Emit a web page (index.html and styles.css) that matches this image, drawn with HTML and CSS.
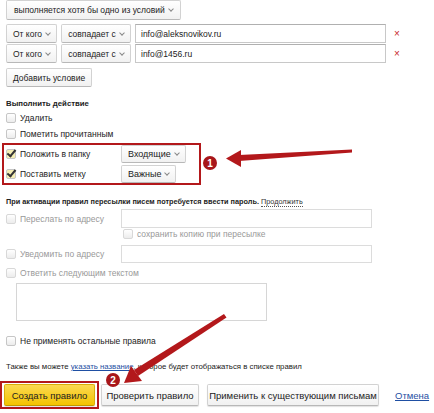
FILE: index.html
```html
<!DOCTYPE html>
<html lang="ru">
<head>
  <meta charset="UTF-8" />
  <title>Создание правила</title>
  <link rel="stylesheet" href="styles.css">
</head>
<body>
  <div class="page">

    <div class="row">
      <button class="btn">выполняется хотя бы одно из условий <span class="chev"></span></button>
    </div>

    <div class="row cond">
      <button class="btn sel-from">От кого <span class="chev"></span></button>
      <button class="btn sel-match">совпадает с <span class="chev"></span></button>
      <input class="field" type="text" value="info@aleksnovikov.ru">
      <span class="remove">×</span>
    </div>
    <div class="row cond second">
      <button class="btn sel-from">От кого <span class="chev"></span></button>
      <button class="btn sel-match">совпадает с <span class="chev"></span></button>
      <input class="field" type="text" value="info@1456.ru">
      <span class="remove">×</span>
    </div>

    <div class="row add">
      <button class="btn">Добавить условие</button>
    </div>

    <div class="heading">Выполнить действие</div>

    <label class="check-row"><span class="box"></span>Удалить</label>
    <label class="check-row"><span class="box"></span>Пометить прочитанным</label>

    <div class="highlight">
      <div class="action-row">
        <label class="action-label"><span class="box checked"></span>Положить в папку</label>
        <button class="btn">Входящие <span class="chev"></span></button>
      </div>
      <div class="action-row">
        <label class="action-label"><span class="box checked"></span>Поставить метку</label>
        <button class="btn">Важные <span class="chev"></span></button>
      </div>
    </div>

    <div class="notice">При активации правил пересылки писем потребуется ввести пароль. <span class="dotted">Продолжить</span></div>

    <div class="action-row disabled forward">
      <label class="action-label"><span class="box"></span>Переслать по адресу</label>
      <input class="field wide" type="text">
    </div>
    <label class="check-row disabled copy"><span class="box"></span>сохранить копию при пересылке</label>
    <div class="action-row disabled notify">
      <label class="action-label"><span class="box"></span>Уведомить по адресу</label>
      <input class="field wide" type="text">
    </div>
    <label class="check-row disabled reply"><span class="box"></span>Ответить следующим текстом</label>
    <textarea class="reply-text"></textarea>

    <label class="check-row stop"><span class="box"></span>Не применять остальные правила</label>

    <div class="hint">Также вы можете <a href="#" class="link">указать название</a>, которое будет отображаться в списке правил</div>

    <div class="buttons">
      <div class="highlight-btn">
        <button class="btn big primary">Создать правило</button>
      </div>
      <button class="btn big check">Проверить правило</button>
      <button class="btn big apply">Применить к существующим письмам</button>
      <a href="#" class="link cancel">Отмена</a>
    </div>

  </div>

  <svg class="marks" viewBox="0 0 434 413" width="434" height="413">
    <polygon points="352,149.5 352,152.5 239,161 239,155" fill="#b3181b"/>
    <polygon points="226,158.5 241,150 241,167" fill="#b3181b"/>
    <polygon points="224,314 226.5,317.5 138,376 134,370" fill="#b3181b"/>
    <polygon points="124,383 131,366 142,381" fill="#b3181b"/>
    <circle cx="210" cy="163" r="7" fill="#a8161a"/>
    <text x="210" y="166.5" text-anchor="middle" class="badge-num">1</text>
    <circle cx="113" cy="380" r="7" fill="#a8161a"/>
    <text x="113" y="383.5" text-anchor="middle" class="badge-num">2</text>
  </svg>
</body>
</html>
```

FILE: styles.css
```css
body {
  margin: 0;
  font-family: Arial, "Liberation Sans", sans-serif;
  font-size: 8.5px;
  color: #222;
  background: #fff;
}

.page {
  padding: 0 6px;
}

.row {
  display: flex;
  align-items: center;
}

.btn {
  display: inline-flex;
  align-items: center;
  justify-content: center;
  flex: none;
  height: 20px;
  padding: 0 7px;
  font-family: Arial, "Liberation Sans", sans-serif;
  font-size: 8.5px;
  color: #222;
  white-space: nowrap;
  background: linear-gradient(#fff, #f1f1f1);
  border: 1px solid #d2d2d2;
  border-bottom-color: #b8b8b8;
  border-radius: 2px;
  box-sizing: border-box;
  cursor: pointer;
}

.chev {
  display: inline-block;
  width: 3px;
  height: 3px;
  margin: -2px 0 0 4px;
  border-right: 1px solid #888;
  border-bottom: 1px solid #888;
  transform: rotate(45deg);
}

.cond {
  margin-top: 4px;
  height: 19px;
}

.cond.second {
  margin-top: 1px;
}

.cond .btn {
  height: 19px;
  padding: 0;
}

.sel-from {
  width: 51px;
}

.sel-match {
  width: 70px;
  margin-left: 4px;
}

.field {
  height: 19px;
  box-sizing: border-box;
  border: 1px solid #c8c8c8;
  border-top-color: #b0b0b0;
  padding: 0 5px;
  font-family: Arial, "Liberation Sans", sans-serif;
  font-size: 8.5px;
  color: #222;
}

.cond .field {
  width: 251px;
  margin-left: 4px;
}

.remove {
  margin-left: 8px;
  color: #c8282c;
  font-size: 10px;
}

.add {
  margin-top: 5px;
}

.add .btn {
  height: 19px;
  padding: 0 6px;
}

.heading {
  margin-top: 11px;
  line-height: 12px;
  font-size: 7.8px;
  font-weight: bold;
}

.check-row {
  display: flex;
  align-items: center;
  height: 16px;
}

.box {
  display: inline-block;
  flex: none;
  width: 8px;
  height: 8px;
  margin-right: 4px;
  border: 1px solid #c6c6c6;
  border-radius: 2px;
  background: linear-gradient(#fff, #ececec);
  position: relative;
}

.box.checked {
  background: #f4eeb4;
}

.box.checked::after {
  content: "";
  position: absolute;
  left: 2px;
  top: -2px;
  width: 3px;
  height: 7px;
  border-right: 2px solid #333;
  border-bottom: 2px solid #333;
  transform: rotate(40deg);
}

.highlight {
  margin: 1px 0 0 -4px;
  width: 193px;
  padding: 0 0 0 2px;
  border: 2px solid #b3181b;
}

.action-row {
  display: flex;
  align-items: center;
}

.highlight .action-row {
  height: 18px;
}

.highlight .action-row + .action-row {
  margin-top: 2px;
}

.highlight .btn {
  height: 18px;
  font-size: 9px;
  padding: 0 6px;
}

.action-label {
  display: flex;
  align-items: center;
  width: 115px;
  flex: none;
  font-size: 8.5px;
}

.notice {
  margin-top: 11px;
  line-height: 12px;
  font-size: 7.3px;
  font-weight: bold;
  color: #222;
}

.dotted {
  font-weight: normal;
  color: #333;
  border-bottom: 1px dotted #555;
}

.disabled {
  color: #999;
}

.disabled .box {
  border-color: #d8d8d8;
}

.forward {
  margin-top: 1px;
}

.field.wide {
  width: 251px;
  height: 19px;
  border-color: #dcdcdc;
}

.copy {
  height: 12px;
  padding-left: 117px;
}

.notify {
  margin-top: 5px;
}

.notify .field.wide {
  height: 18px;
}

.reply {
  margin-top: 3px;
  height: 14px;
}

.reply-text {
  display: block;
  margin: 3px 0 0 10px;
  width: 251px;
  height: 38px;
  box-sizing: border-box;
  border: 1px solid #d6d6d6;
  resize: none;
}

.stop {
  margin-top: 13px;
  height: 14px;
  font-size: 8.5px;
}

.hint {
  margin-top: 13px;
  line-height: 12px;
  font-size: 7.8px;
  color: #222;
}

.link {
  color: #1f4fa3;
  text-decoration: underline;
}

.buttons {
  display: flex;
  align-items: center;
  margin-top: 8px;
}

.highlight-btn {
  flex: none;
  margin-left: -6px;
  padding: 1px 2px;
  border: 2px solid #b3181b;
}

.btn.big {
  height: 22px;
  font-size: 9.5px;
  padding: 0;
  box-shadow: 0 1px 1px rgba(0,0,0,0.12);
}

.primary {
  width: 91px;
  background: linear-gradient(#fbd952, #f4c300);
  border-color: #d9ae09;
  border-bottom-color: #c19900;
}

.check {
  width: 98px;
  margin-left: 2px;
}

.apply {
  width: 172px;
  margin-left: 8px;
}

.cancel {
  flex: none;
  margin-left: 16px;
  font-size: 9.5px;
}

.marks {
  position: absolute;
  left: 0;
  top: 0;
  pointer-events: none;
}

.badge-num {
  fill: #fff;
  font-family: Arial, "Liberation Sans", sans-serif;
  font-size: 10px;
  font-weight: bold;
}
```
